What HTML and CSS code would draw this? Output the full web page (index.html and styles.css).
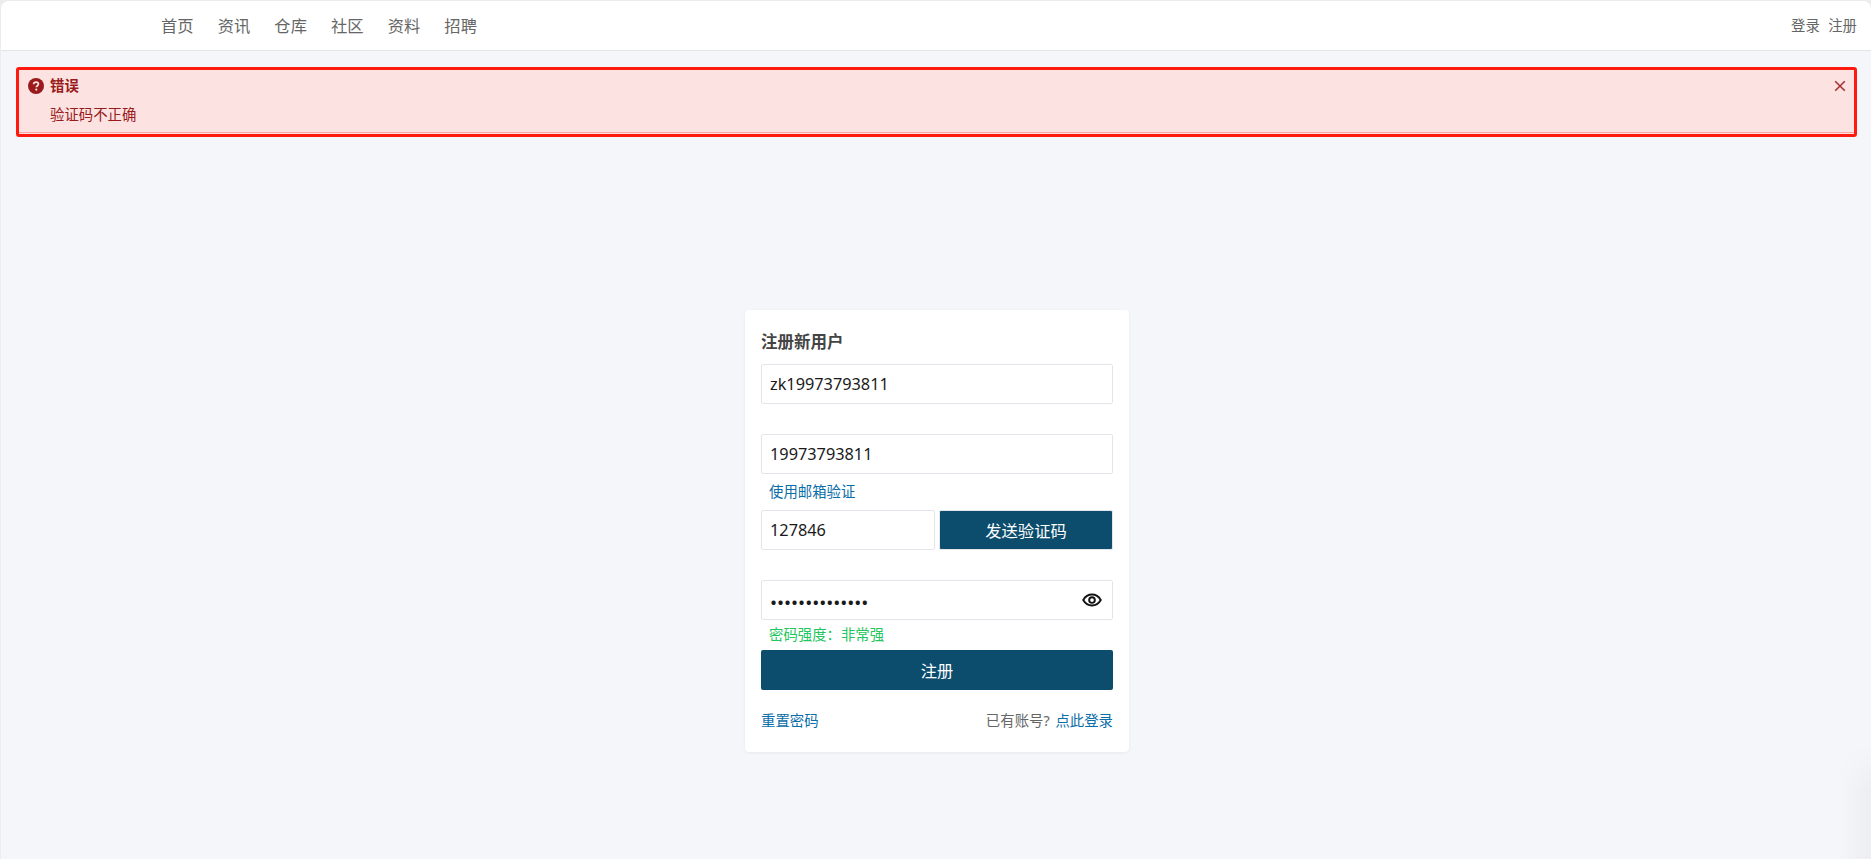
FILE: index.html
```html
<!DOCTYPE html>
<html lang="zh-CN">
<head>
<meta charset="utf-8">
<title>注册新用户</title>
<link rel="stylesheet" href="styles.css">
</head>
<body>
<div class="page">
  <header class="topbar">
    <nav class="nav">
      <a href="#">首页</a><a href="#">资讯</a><a href="#">仓库</a><a href="#">社区</a><a href="#">资料</a><a href="#">招聘</a>
    </nav>
    <div class="auth"><a href="#">登录</a><a href="#">注册</a></div>
  </header>
  <div class="alert">
    <div class="alert-head">
      <svg class="alert-icon" viewBox="0 0 16 16"><circle cx="8" cy="8" r="8" fill="#991b1b"/><path d="M5.600 6.200C5.700 4.900 6.700 4.100 8 4.100c1.400 0 2.400.8 2.400 2 0 1-.6 1.500-1.300 1.900-.5.3-.7.6-.7 1.200" fill="none" stroke="#fde2e2" stroke-width="1.700"/><circle cx="8.300" cy="11.600" r="1.100" fill="#fde2e2"/></svg>
      <span class="alert-title">错误</span>
      <svg class="alert-close" viewBox="0 0 12 12"><path d="M1.200 1.200l9.600 9.600M10.800 1.200l-9.600 9.600" stroke="#a83232" stroke-width="1.600" fill="none"/></svg>
    </div>
    <p class="alert-text">验证码不正确</p>
    <div class="alert-line"></div>
  </div>
  <main class="main">
    <form class="card">
      <h2 class="card-title">注册新用户</h2>
      <input class="field" type="text" value="zk19973793811">
      <input class="field field-gap" type="text" value="19973793811">
      <a class="hint hint-link" href="#">使用邮箱验证</a>
      <div class="code-row">
        <input class="field" type="text" value="127846">
        <button class="send" type="button">发送验证码</button>
      </div>
      <div class="pw-wrap">
        <input class="field pw" type="password" value="zk19973793811a">
        <svg class="eye" viewBox="0 0 24 24"><path d="M1.500 12C4 7.600 7.700 5.400 12 5.400s8 2.200 10.500 6.600C20 16.400 16.300 18.600 12 18.600S4 16.400 1.500 12z" fill="none" stroke="#111" stroke-width="2.300"/><circle cx="12" cy="12" r="3.400" fill="none" stroke="#111" stroke-width="2.300"/></svg>
      </div>
      <p class="hint hint-ok">密码强度：非常强</p>
      <button class="submit" type="button">注册</button>
      <div class="foot">
        <a href="#">重置密码</a>
        <span class="foot-right">已有账号? <a href="#">点此登录</a></span>
      </div>
    </form>
  </main>
  <div class="edge-shade"></div>
</div>
</body>
</html>
```
FILE: styles.css
```css
* { box-sizing: border-box; }
html, body { margin: 0; height: 100%; }
body {
  background: #ececec;
  font-family: "Noto Sans", "Noto Sans CJK SC", sans-serif;
  overflow: hidden;
}
a { text-decoration: none; color: #0b6ea8; }
.page {
  position: relative;
  height: 859px;
  margin-top: 1px;
  margin-left: 1px;
  background: #f4f6fa;
  border-radius: 8px 8px 0 0;
  overflow: hidden;
  display: flex;
  flex-direction: column;
}
.topbar {
  height: 50px;
  flex: none;
  background: #fff;
  border-bottom: 1px solid #e3e5ea;
  display: flex;
  align-items: center;
  justify-content: space-between;
  padding: 0 14px 0 160px;
}
.nav { display: flex; gap: 24.100px; padding-top: 1px; }
.nav a { color: #666; font-size: 16.300px; line-height: 24px; }
.auth { display: flex; gap: 8.400px; }
.auth a { color: #666; font-size: 14.400px; line-height: 20px; }
.alert {
  margin: 16px 14px 0 15px;
  height: 70px;
  flex: none;
  border: 3px solid #ff1a10;
  border-radius: 3px;
  background: #fde2e2;
  padding: 6px 8px 0 9px;
  display: flex;
  flex-direction: column;
}
.alert-head { display: flex; align-items: center; height: 20px; }
.alert-icon { width: 16px; height: 16px; flex: none; }
.alert-title { margin-left: 6px; font-size: 14.400px; font-weight: 700; color: #991b1b; line-height: 20px; }
.alert-close { width: 12px; height: 12px; margin-left: auto; flex: none; }
.alert-text { margin: 9px 0 0 22px; font-size: 14.400px; line-height: 20px; color: #991b1b; }
.alert-line { margin: 7px -8px 0 -9px; height: 1px; background: #fca5a5; }
.main { flex: 1; display: flex; justify-content: center; padding-top: 173px; padding-left: 2px; }
.card {
  width: 384px;
  height: 442px;
  background: #fff;
  border-radius: 4px;
  box-shadow: 0 1px 3px rgba(0,0,0,.06);
  padding: 16px;
  display: flex;
  flex-direction: column;
}
.card-title { margin: 1px 0 8px; font-size: 16.500px; line-height: 29px; font-weight: 700; color: #444; }
.field {
  width: 100%;
  height: 40px;
  flex: none;
  border: 1px solid #e3e5ea;
  border-radius: 2px;
  background: #fff;
  padding: 0 8px;
  font: 16.300px "Noto Sans", "Noto Sans CJK SC", sans-serif;
  color: #1a1a1a;
  outline: none;
}
.pw { font-size: 18.700px; padding-top: 2px; }
.field-gap { margin-top: 30px; }
.hint { display: block; margin: 0; padding-left: 8px; font-size: 14.400px; line-height: 36px; height: 36px; }
.hint-link { color: #0b6ea8; }
.code-row { display: flex; gap: 4px; }
.code-row .field { width: 174px; }
.send {
  flex: 1;
  height: 40px;
  background: #0c4d6e;
  color: #fff;
  border: 1px solid #e3e5ea;
  border-radius: 2px;
  font: 16.300px "Noto Sans", "Noto Sans CJK SC", sans-serif;
}
.pw-wrap { position: relative; margin-top: 30px; }
.eye { position: absolute; right: 11px; top: 10px; width: 20px; height: 20px; }
.hint-ok { color: #22c55e; height: 30px; line-height: 30px; }
.submit {
  width: 100%;
  height: 40px;
  flex: none;
  background: #0c4d6e;
  color: #fff;
  border: none;
  border-radius: 2px;
  font: 16.300px "Noto Sans", "Noto Sans CJK SC", sans-serif;
}
.foot {
  margin-top: 20px;
  display: flex;
  justify-content: space-between;
  font-size: 14.400px;
  line-height: 21px;
}
.foot-right { color: #666; word-spacing: 2px; }
.edge-shade {
  position: absolute;
  right: 0;
  bottom: 0;
  width: 32px;
  height: 115px;
  background: linear-gradient(to right, rgba(0,0,0,0), rgba(0,0,0,.03));
  -webkit-mask-image: linear-gradient(to bottom, transparent, #000 40%);
  mask-image: linear-gradient(to bottom, transparent, #000 40%);
  pointer-events: none;
}
```
